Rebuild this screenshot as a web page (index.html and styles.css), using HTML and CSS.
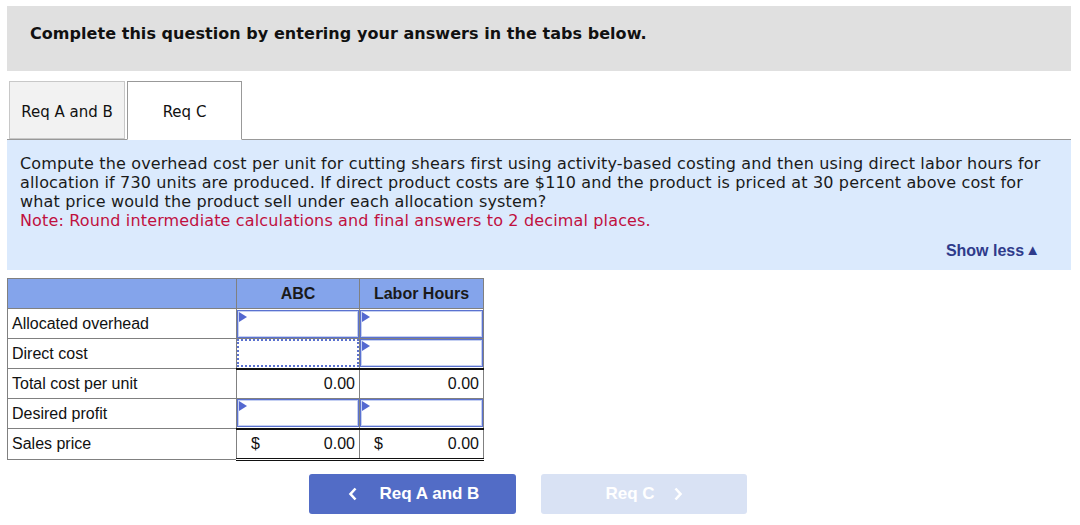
FILE: index.html
```html
<!DOCTYPE html>
<html>
<head>
<meta charset="utf-8">
<link rel="stylesheet" href="styles.css">
</head>
<body>
<div class="wrap">
  <div class="header">Complete this question by entering your answers in the tabs below.</div>
  <div class="tabs">
    <div class="tab tab-off">Req A and B</div>
    <div class="tab tab-on">Req C</div>
  </div>
  <div class="panel">
    <p class="q">Compute the overhead cost per unit for cutting shears first using activity-based costing and then using direct labor hours for allocation if 730 units are produced. If direct product costs are $110 and the product is priced at 30 percent above cost for what price would the product sell under each allocation system?</p>
    <p class="note">Note: Round intermediate calculations and final answers to 2 decimal places.</p>
    <div class="showless">Show less<span class="tri">&#9650;</span></div>
  </div>
  <table class="grid">
    <colgroup><col class="c1"><col class="c2"><col class="c3"></colgroup>
    <tr class="head"><th></th><th>ABC</th><th>Labor Hours</th></tr>
    <tr>
      <td class="lbl">Allocated overhead</td>
      <td class="inp"><div class="box"><span class="flag"></span></div></td>
      <td class="inp"><div class="box"><span class="flag"></span></div></td>
    </tr>
    <tr>
      <td class="lbl">Direct cost</td>
      <td class="inp"><div class="box focus"></div></td>
      <td class="inp"><div class="box"><span class="flag"></span></div></td>
    </tr>
    <tr>
      <td class="lbl">Total cost per unit</td>
      <td class="calc">0.00</td>
      <td class="calc">0.00</td>
    </tr>
    <tr>
      <td class="lbl">Desired profit</td>
      <td class="inp"><div class="box"><span class="flag"></span></div></td>
      <td class="inp"><div class="box"><span class="flag"></span></div></td>
    </tr>
    <tr class="last">
      <td class="lbl">Sales price</td>
      <td class="calc total"><span class="dol">$</span><span>0.00</span></td>
      <td class="calc total"><span class="dol">$</span><span>0.00</span></td>
    </tr>
  </table>
  <div class="nav">
    <div class="btn prev"><svg class="chev" width="10" height="14" viewBox="0 0 10 14"><path d="M7.5 1.5 L2.5 7 L7.5 12.5" fill="none" stroke="#fff" stroke-width="2.6"/></svg><span>Req A and B</span></div>
    <div class="btn next"><span>Req C</span><svg class="chev" width="10" height="14" viewBox="0 0 10 14"><path d="M2.5 1.5 L7.5 7 L2.5 12.5" fill="none" stroke="#fff" stroke-width="2.6"/></svg></div>
  </div>
</div>
</body>
</html>
```

FILE: styles.css
```css
* { box-sizing: border-box; }
body { margin: 0; background: #fff; }
.wrap { padding: 6px 9px 0 7px; width: 1080px; }
.header {
  height: 65px;
  background: #e0e0e0;
  padding: 18px 0 0 23px;
  font: bold 16px "DejaVu Sans", Verdana, sans-serif;
  letter-spacing: 0.05px;
  color: #111;
}
.tabs {
  margin-top: 10px;
  display: flex;
  gap: 2px;
  padding-left: 2px;
  border-bottom: 1px solid #999;
  height: 59px;
}
.tab {
  height: 59px;
  display: flex;
  align-items: center;
  justify-content: center;
  font: 15px "DejaVu Sans", Verdana, sans-serif;
  color: #111;
  padding-top: 3px;
}
.tab-off { width: 116px; background: #f2f2f2; border: 1px solid #c8c8c8; height: 58px; }
.tab-on { width: 115px; background: #fff; border: 1px solid #999; border-bottom: 1px solid #fff; height: 59px; margin-bottom: -1px; }
.panel {
  background: #dbeafd;
  height: 130px;
  padding: 14px 20px 0 13px;
  font: 16px "DejaVu Sans", Verdana, sans-serif;
  letter-spacing: 0.15px;
  line-height: 19px;
  color: #1a1a1a;
}
.q, .note { margin: 0; }
.note { color: #c0103f; }
.showless {
  margin-top: 12px;
  text-align: right;
  padding-right: 11px;
  font: bold 16px "Liberation Sans", Arial, sans-serif;
  letter-spacing: 0;
  color: #2f3b8b;
}
.tri { font-size: 15px; margin-left: 1px; position: relative; top: -1px; }
.grid {
  margin-top: 8px;
  border-collapse: collapse;
  font: 16px "Liberation Sans", Arial, sans-serif;
  color: #111;
  table-layout: fixed;
  width: 476px;
}
.c1 { width: 229px; }
.c2 { width: 123px; }
.c3 { width: 124px; }
.grid td, .grid th { border: 1px solid #808080; height: 30px; padding: 0; }
.grid .last td { height: 31px; }
.head th { background: #84a4eb; font-weight: bold; text-align: center; color: #1a1a1a; }
.lbl { padding-left: 4px !important; }
.inp { padding: 0; vertical-align: middle; }
.box {
  position: relative;
  height: 28px;
  border: 1px solid #5b72d0;
  box-shadow: inset 0 0 0 1px #c5d0f2;
  background: #fff;
}
.box.focus { border: 2px dotted #5b72d0; box-shadow: none; }
.flag {
  position: absolute;
  left: 1px; top: 1px;
  width: 0; height: 0;
  border-top: 5px solid transparent;
  border-bottom: 5px solid transparent;
  border-left: 8px solid #5468d0;
}
.calc { text-align: right; padding-right: 4px !important; border-top: 2px solid #111 !important; }
.total { border-bottom: 3px double #111 !important; text-align: left; }
.total .dol { display: inline-block; width: 20px; margin-left: 14px; }
.total span:last-child { float: right; }
.nav { display: flex; gap: 25px; padding-left: 302px; margin-top: 13px; }
.btn {
  height: 40px;
  border-radius: 3px;
  display: flex;
  align-items: center;
  justify-content: center;
  font: bold 17px "Liberation Sans", Arial, sans-serif;
  color: #fff;
}
.prev { width: 207px; background: #526cc6; gap: 22px; padding-left: 2px; }
.next { width: 206px; background: #d9e2f4; gap: 18px; }
.chev { display: block; }
```
